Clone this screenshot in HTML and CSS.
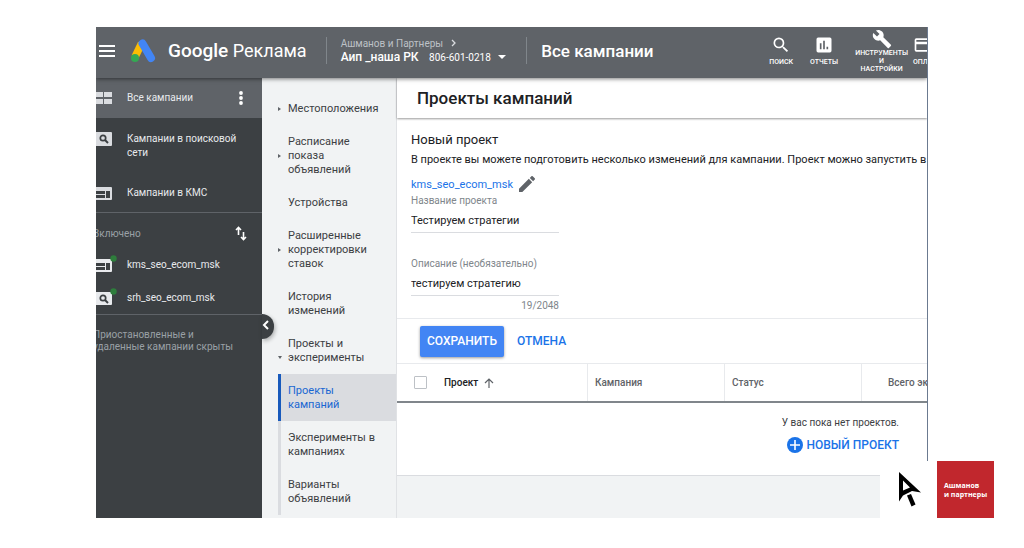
FILE: index.html
```
<!DOCTYPE html>
<html lang="ru">
<head>
  <meta charset="UTF-8">
  <title>Google Реклама - Проекты кампаний</title>
  <link rel="stylesheet" href="styles.css">
</head>
<body>
  <div class="app">
    <header class="header">
      <button class="icon-button" aria-label="Меню">
        <svg width="16" height="12" viewBox="0 0 16 12"><path d="M0 1h16M0 6h16M0 11h16" stroke="#fff" stroke-width="2"/></svg>
      </button>
      <a href="#" class="logo">
        <svg width="26" height="24" viewBox="0 0 26 24">
          <path d="M10.500 4.500L4 18" stroke="#fbbc04" stroke-width="7.500"/>
          <path d="M11.500 4.500L20 19" stroke="#4285f4" stroke-width="8" stroke-linecap="round"/>
          <circle cx="4" cy="19" r="4" fill="#34a853"/>
        </svg>
        <span><span class="logo-google">Google</span> Реклама</span>
      </a>
      <div class="account">
        <a href="#" class="account-parent">Ашманов и Партнеры
          <svg width="6" height="8" viewBox="0 0 6 8"><path d="M1 1l3 3-3 3" fill="none" stroke="#dadce0" stroke-width="1.300"/></svg>
        </a>
        <button class="account-current"><b>Аип _наша РК</b> 806-601-0218
          <svg width="8" height="4" viewBox="0 0 8 4"><path d="M0 0h8L4 4z" fill="#fff"/></svg>
        </button>
      </div>
      <div class="scope">Все кампании</div>
      <nav class="tools">
        <a href="#">
          <svg width="20" height="20" viewBox="0 0 24 24" fill="#fff"><path d="M15.500 14h-.79l-.28-.27A6.470 6.470 0 0 0 16 9.500 6.500 6.500 0 1 0 9.500 16c1.610 0 3.090-.59 4.230-1.570l.27.28v.79l5 4.990L20.490 19l-4.990-5zm-6 0C7.010 14 5 11.990 5 9.500S7.010 5 9.500 5 14 7.010 14 9.500 11.990 14 9.500 14z"/></svg>
          поиск
        </a>
        <a href="#">
          <svg width="20" height="20" viewBox="0 0 24 24" fill="#fff"><path d="M19 3H5a2 2 0 0 0-2 2v14a2 2 0 0 0 2 2h14a2 2 0 0 0 2-2V5a2 2 0 0 0-2-2zM9 17H7v-7h2v7zm4 0h-2V7h2v10zm4 0h-2v-3h2v3z"/></svg>
          отчеты
        </a>
        <a href="#" class="tools-wide">
          <svg width="20" height="20" viewBox="0 0 24 24" fill="#fff"><path d="M22.700 19l-9.100-9.100c.9-2.300.4-5-1.500-6.900-2-2-5-2.400-7.400-1.300L9 6 6 9 1.600 4.700C.4 7.100.9 10.100 2.900 12.100c1.900 1.900 4.600 2.400 6.900 1.500l9.100 9.100c.4.4 1 .4 1.400 0l2.300-2.300c.5-.4.5-1.100.1-1.400z"/></svg>
          <span>инструменты<br>и<br>настройки</span>
        </a>
        <a href="#" class="tools-cut">
          <svg width="20" height="20" viewBox="0 0 24 24" fill="#fff"><path d="M20 4H4a2 2 0 0 0-2 2v12a2 2 0 0 0 2 2h16a2 2 0 0 0 2-2V6a2 2 0 0 0-2-2zm0 14H4v-7h16v7zm0-10H4V6h16v2z"/></svg>
          оплата
        </a>
      </nav>
    </header>

    <div class="body">
      <aside class="campaigns">
        <a href="#" class="campaign campaign-all">
          <svg width="16" height="12" viewBox="0 0 16 12" fill="#dadce0"><path d="M0 0h7v5H0zM8 0h8v5H8zM0 7h7v5H0zM8 7h8v5H8z"/></svg>
          <span>Все кампании</span>
          <svg class="more" width="4" height="14" viewBox="0 0 4 14" fill="#fff"><circle cx="2" cy="2" r="1.900"/><circle cx="2" cy="7" r="1.900"/><circle cx="2" cy="12" r="1.900"/></svg>
        </a>
        <a href="#" class="campaign campaign-search">
          <svg width="16" height="14" viewBox="0 0 16 14"><path d="M0 0h15a1 1 0 0 1 1 1v12a1 1 0 0 1-1 1H0z" fill="#dadce0"/><circle cx="7" cy="6" r="2.700" fill="none" stroke="#3c4043" stroke-width="1.700"/><path d="M9 8l3 3" stroke="#3c4043" stroke-width="2"/></svg>
          <span>Кампании в поисковой сети</span>
        </a>
        <a href="#" class="campaign campaign-display">
          <svg width="16" height="14" viewBox="0 0 16 14"><path d="M0 1h15a1 1 0 0 1 1 1v11a1 1 0 0 1-1 1H0z" fill="#dadce0"/><path d="M0 5h9v3H0zM0 9h9v3H0zM10 5h4v7h-4z" fill="#3c4043"/></svg>
          <span>Кампании в КМС</span>
        </a>
        <div class="enabled">
          <span>Включено</span>
          <button class="icon-button" aria-label="Сортировать">
            <svg width="12" height="15" viewBox="0 0 12 15" fill="none" stroke="#fff" stroke-width="1.600"><path d="M3.500 9V1.500M1 4l2.500-2.500L6 4M8.500 6v7.500M6 11l2.500 2.500L11 11"/></svg>
          </button>
        </div>
        <a href="#" class="campaign campaign-small">
          <svg width="21" height="20" viewBox="0 0 21 20"><path d="M0 4h15a1 1 0 0 1 1 1v11a1 1 0 0 1-1 1H0z" fill="#e8eaed"/><path d="M0 8h9v3H0zM0 12h9v3H0zM10 8h4v7h-4z" fill="#3c4043"/><circle cx="17.500" cy="3.500" r="3.200" fill="#2e7d3c"/></svg>
          <span>kms_seo_ecom_msk</span>
        </a>
        <a href="#" class="campaign campaign-small">
          <svg width="21" height="20" viewBox="0 0 21 20"><path d="M0 4h15a1 1 0 0 1 1 1v11a1 1 0 0 1-1 1H0z" fill="#e8eaed"/><circle cx="7" cy="10" r="2.700" fill="none" stroke="#3c4043" stroke-width="1.700"/><path d="M9 12l3 3" stroke="#3c4043" stroke-width="2"/><circle cx="17.500" cy="3.500" r="3.200" fill="#2e7d3c"/></svg>
          <span>srh_seo_ecom_msk</span>
        </a>
        <p class="hidden-note">Приостановленные и<br>удаленные кампании скрыты</p>
      </aside>

      <nav class="pages">
        <button class="collapse" aria-label="Свернуть">
          <svg width="8" height="12" viewBox="0 0 8 12"><path d="M6 2L2 6l4 4" fill="none" stroke="#fff" stroke-width="2"/></svg>
        </button>
        <a href="#" class="page closed">Местоположения</a>
        <a href="#" class="page closed">Расписание показа объявлений</a>
        <a href="#" class="page">Устройства</a>
        <a href="#" class="page closed">Расширенные корректировки ставок</a>
        <a href="#" class="page">История изменений</a>
        <a href="#" class="page open">Проекты и эксперименты</a>
        <a href="#" class="page sub active">Проекты кампаний</a>
        <a href="#" class="page sub">Эксперименты в кампаниях</a>
        <a href="#" class="page sub">Варианты объявлений</a>
      </nav>

      <main class="content">
        <h1>Проекты кампаний</h1>
        <form class="draft">
          <h2>Новый проект</h2>
          <p>В проекте вы можете подготовить несколько изменений для кампании. Проект можно запустить в качестве эксперимента.</p>
          <div class="draft-campaign">
            <a href="#">kms_seo_ecom_msk</a>
            <svg width="16" height="16" viewBox="3 3 18 18" fill="#5f6368"><path d="M3 17.250V21h3.750L17.810 9.940l-3.750-3.750L3 17.250zM20.710 7.040a1 1 0 0 0 0-1.410l-2.340-2.340a1 1 0 0 0-1.410 0l-1.830 1.830 3.750 3.750 1.830-1.830z"/></svg>
          </div>
          <div class="field">
            <label for="name">Название проекта</label>
            <input type="text" id="name" value="Тестируем стратегии">
          </div>
          <div class="field">
            <label for="description">Описание (необязательно)</label>
            <input type="text" id="description" value="тестируем стратегию">
            <span class="counter">19/2048</span>
          </div>
        </form>
        <div class="actions">
          <button class="save">Сохранить</button>
          <button class="cancel">Отмена</button>
        </div>
        <table class="drafts">
          <thead>
            <tr>
              <th class="col-draft">
                <div class="draft-head">
                  <input type="checkbox" aria-label="Выбрать все">
                  Проект
                  <svg width="10" height="10" viewBox="0 0 10 10" fill="none" stroke="#5f6368" stroke-width="1.200"><path d="M5 10V1M1 5l4-4 4 4"/></svg>
                </div>
              </th>
              <th class="col-text">Кампания</th>
              <th class="col-text">Статус</th>
              <th class="col-total">Всего экспериментов</th>
            </tr>
          </thead>
          <tbody>
            <tr>
              <td colspan="4">
                <p>У вас пока нет проектов.</p>
                <button class="new-draft">
                  <svg width="16" height="16" viewBox="0 0 16 16"><circle cx="8" cy="8" r="8" fill="#1a73e8"/><path d="M8 3v10M3 8h10" stroke="#fff" stroke-width="1.600"/></svg>
                  Новый проект
                </button>
              </td>
            </tr>
          </tbody>
        </table>
      </main>
    </div>
  </div>

  <div class="brand">
    <svg width="22" height="35" viewBox="0 0 22 35">
      <path fill-rule="evenodd" d="M0 0L22 20.500L13 19L4 23.500L0 29.500zM4 8.500V18.500L11 15.500z"/>
      <path d="M8 23.500l4-1.500 4.500 10.500-4 2z"/>
    </svg>
    <div class="brand-name">Ашманов<br>и партнеры</div>
  </div>
</body>
</html>
```
FILE: styles.css
```
body {
  position: relative;
  margin: 0;
  padding: 27px 96px 30px;
  background: #fff;
  font-family: Roboto, sans-serif;
  font-size: 11px;
  color: #202124;
}

a {
  color: inherit;
  text-decoration: none;
}

button {
  padding: 0;
  border: none;
  background: none;
  font-family: inherit;
  color: inherit;
  cursor: pointer;
}

svg {
  flex-shrink: 0;
}

h1, h2, p {
  margin: 0;
}

.app {
  border-right: 1px solid #6b7a90;
  overflow: hidden;
}

/* header */
.header {
  position: relative;
  box-sizing: border-box;
  display: flex;
  align-items: center;
  height: 51px;
  padding: 0 0 4px 3px;
  background: #5f6368;
  color: #fff;
  white-space: nowrap;
  box-shadow: 0 1px 4px rgba(0,0,0,0.5);
  z-index: 1;
}

.icon-button {
  display: flex;
}

.logo {
  display: flex;
  align-items: center;
  gap: 11px;
  margin-left: 16px;
  font-size: 18px;
}

.logo-google {
  font-size: 19px;
  font-weight: 500;
}

.account {
  display: flex;
  flex-direction: column;
  gap: 1px;
  margin-left: 19px;
  padding: 0 20px 0 14px;
  border-left: 1px solid #80868b;
  border-right: 1px solid #80868b;
  line-height: 13px;
}

.account-parent {
  font-size: 10px;
  color: #bdc1c6;
}

.account-parent svg {
  margin-left: 5px;
}

.account-current {
  font-size: 10px;
  line-height: 13px;
  text-align: left;
}

.account-current b {
  margin-right: 8px;
  font-size: 12px;
  font-weight: 500;
}

.account-current svg {
  margin: 0 0 2px 5px;
}

.scope {
  margin-left: 14px;
  font-size: 17px;
  font-weight: 500;
}

.tools {
  display: flex;
  align-items: center;
  gap: 17px;
  margin-left: auto;
  font-size: 7px;
  line-height: 8px;
  font-weight: 500;
  text-transform: uppercase;
}

.tools a {
  display: flex;
  flex-direction: column;
  align-items: center;
  gap: 3px;
}

.tools .tools-wide {
  gap: 0;
  text-align: center;
}

.tools .tools-cut {
  align-items: flex-start;
  width: 14px;
  margin-left: -12px;
}

.body {
  display: flex;
}

/* campaign list */
.campaigns {
  flex: 0 0 166px;
  background: #3c4043;
  color: #e8eaed;
}

.campaign {
  display: flex;
  align-items: center;
  gap: 15px;
  font-size: 10px;
  line-height: 14px;
}

.campaign-all {
  height: 40px;
  background: #5f6368;
}

.more {
  margin-left: auto;
  margin-right: 19px;
}

.campaign-search {
  align-items: flex-start;
  padding: 14px 16px 12px 0;
}

.campaign-display {
  padding: 14px 0 12px;
  border-bottom: 1px solid #5f6368;
}

.enabled {
  display: flex;
  align-items: center;
  justify-content: space-between;
  height: 30px;
  padding: 5px 15px 0 0;
  margin-left: -3px;
  font-size: 10px;
  color: #9aa0a6;
}

.campaign-small {
  gap: 10px;
  height: 33px;
}

.hidden-note {
  padding: 14px 0 0;
  margin-left: -3px;
  border-top: 1px solid #5f6368;
  font-size: 10px;
  line-height: 12px;
  color: #9aa0a6;
  white-space: nowrap;
}

/* page menu */
.pages {
  position: relative;
  box-sizing: border-box;
  flex: 0 0 135px;
  padding: 14px 0 3px 16px;
  border-right: 1px solid #e0e2e5;
  background: #f1f3f4;
}

.collapse {
  position: absolute;
  top: 236px;
  left: 0;
  width: 12px;
  height: 25px;
  padding-right: 5px;
  border-radius: 0 13px 13px 0;
  background: #3c4043;
  box-shadow: 1px 2px 4px rgba(0,0,0,0.3);
}

.page {
  position: relative;
  display: block;
  padding: 10px 16px 9px 10px;
  font-size: 11px;
  line-height: 14px;
  color: #3c4043;
}

.closed::before,
.open::before {
  content: "";
  position: absolute;
  top: 50%;
  left: 0;
  border: 2px solid transparent;
}

.closed::before {
  margin-top: -2px;
  border-left: 3px solid #5f6368;
  border-right: none;
}

.open::before {
  margin-top: 5px;
  border-top: 3px solid #5f6368;
  border-bottom: none;
}

.sub {
  padding-left: 7px;
  border-left: 3px solid #dadce0;
}

.active {
  border-left-color: #185abc;
  background: #dadce0;
  color: #1967d2;
}

/* content */
.content {
  flex: 1;
  min-width: 0;
  background: #f1f3f4;
}

h1 {
  position: relative;
  padding-left: 20px;
  background: #fff;
  font-size: 17px;
  font-weight: 500;
  line-height: 40px;
  box-shadow: 0 1px 2px rgba(0,0,0,0.4);
}

.draft {
  padding: 14px 0 2px 14px;
  background: #fff;
}

h2 {
  font-size: 13px;
  font-weight: 400;
  line-height: 16px;
}

.draft p {
  margin-top: 4px;
  line-height: 16px;
  white-space: nowrap;
}

.draft-campaign {
  display: flex;
  align-items: center;
  gap: 6px;
  height: 18px;
  margin-top: 7px;
  color: #1a73e8;
}

.field {
  display: flex;
  flex-direction: column;
  width: 148px;
  margin-bottom: 23px;
}

.field:last-child {
  margin-bottom: 0;
}

.field label,
.counter {
  font-size: 10px;
  line-height: 16px;
  color: #80868b;
}

.field input {
  height: 23px;
  padding: 0;
  border: none;
  border-bottom: 1px solid #dadce0;
  background: none;
  font-family: inherit;
  font-size: 11px;
  color: #202124;
}

.field .counter {
  line-height: 20px;
  text-align: right;
}

.actions {
  display: flex;
  align-items: center;
  gap: 13px;
  height: 44px;
  padding-left: 23px;
  border-top: 1px solid #e8eaed;
  background: #fff;
}

.actions button {
  font-size: 12px;
  font-weight: 500;
  text-transform: uppercase;
}

.save {
  width: 84px;
  height: 31px;
  border-radius: 2px;
  background: #4285f4;
  color: #fff;
  box-shadow: 0 1px 3px rgba(0,0,0,0.4);
}

.cancel {
  color: #1a73e8;
}

.drafts {
  width: 100%;
  table-layout: fixed;
  border-collapse: collapse;
  background: #fff;
}

.drafts th {
  height: 37px;
  padding: 0 0 0 7px;
  border-top: 1px solid #e8eaed;
  border-left: 1px solid #e8eaed;
  border-bottom: 2px solid #80868b;
  font-size: 10px;
  font-weight: 500;
  text-align: left;
  color: #5f6368;
  white-space: nowrap;
  overflow: hidden;
}

.drafts .col-draft {
  width: 173px;
  padding-left: 17px;
  border-left: none;
  color: #202124;
}

.col-text {
  width: 129px;
}

.drafts .col-total {
  padding-left: 26px;
}

.draft-head {
  display: flex;
  align-items: center;
  gap: 6px;
}

.draft-head input {
  appearance: none;
  width: 13px;
  height: 13px;
  margin: 0 11px 0 0;
  border: 1px solid #bdc1c6;
  border-radius: 1px;
}

.drafts td {
  height: 66px;
  padding: 0 28px 6px 0;
  border-bottom: 1px solid #dadce0;
  text-align: right;
}

.drafts p {
  margin-bottom: 8px;
  font-size: 10px;
  line-height: 12px;
  color: #3c4043;
}

.new-draft {
  display: inline-flex;
  align-items: center;
  gap: 4px;
  font-size: 12px;
  font-weight: 500;
  text-transform: uppercase;
  color: #1a73e8;
}

/* agency mark over the corner of the window */
.brand {
  position: absolute;
  right: 30px;
  bottom: 30px;
  display: flex;
  align-items: center;
  justify-content: space-between;
  width: 95px;
  height: 57px;
  padding-left: 19px;
  background: #fff;
}

.brand-name {
  box-sizing: border-box;
  width: 57px;
  height: 57px;
  padding: 20px 0 0 7px;
  background: #c1272d;
  color: #fff;
  font-family: "Open Sans", sans-serif;
  font-size: 7px;
  font-weight: 700;
  line-height: 9px;
}
```
